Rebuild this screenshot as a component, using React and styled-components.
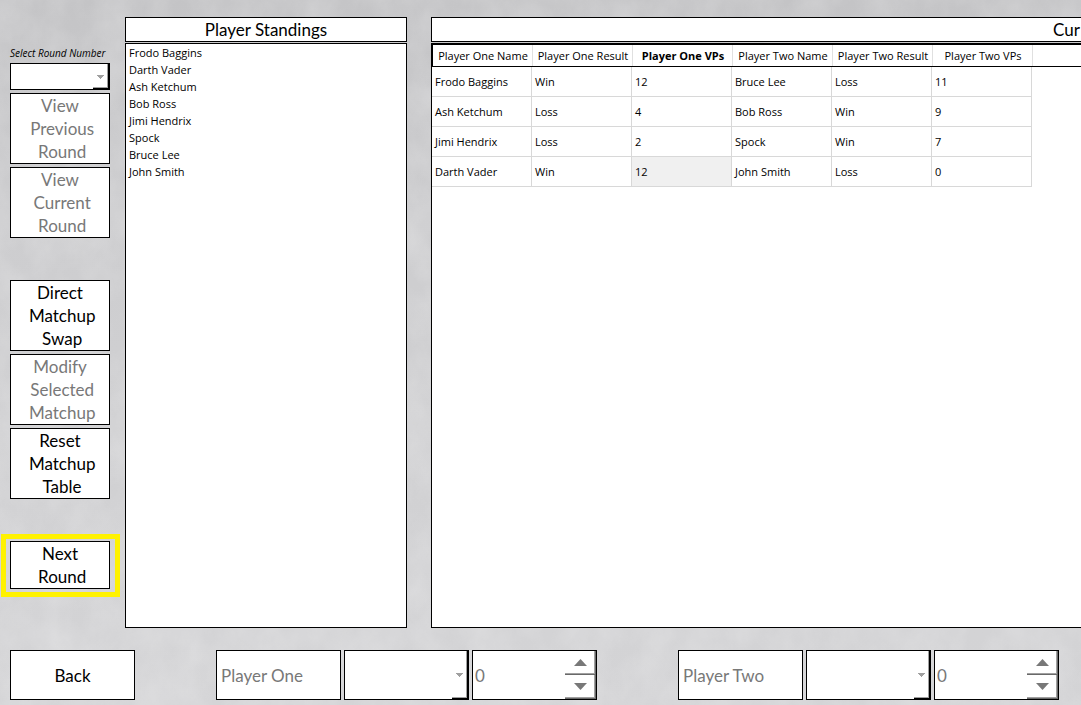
import React from "react";
import styled, { createGlobalStyle } from "styled-components";

const small = '"Open Sans", "Noto Sans", sans-serif';
const large = 'Lato, "Open Sans", sans-serif';

const GlobalStyle = createGlobalStyle`
  *, *::before, *::after { box-sizing: border-box; }
  body { margin: 0; background: #d2d2d4; overflow-x: hidden; }
  button, input, select { font: inherit; border-radius: 0; margin: 0; }
`;

const Page = styled.div`
  position: relative;
  isolation: isolate;
  display: flex;
  flex-direction: column;
  gap: 22px;
  min-height: 100vh;
  padding: 17px 0 5px 10px;
  overflow: hidden;
  font-family: ${large};
  font-size: 17px;
  line-height: 23px;
  color: #000;
`;

const Texture = styled.svg`
  position: absolute;
  inset: 0;
  z-index: -1;
  width: 100%;
  height: 100%;
`;

const Main = styled.main`
  flex: 1;
  display: grid;
  grid-template-columns: 100px 282px minmax(0, 1fr);
  column-gap: 15px;
`;

const Sidebar = styled.aside`
  display: flex;
  flex-direction: column;
  gap: 42px;
  padding-top: 28px;
`;

const Group = styled.div`
  display: flex;
  flex-direction: column;
  gap: 3px;
`;

const RoundLabel = styled.label`
  height: 15px;
  font-family: ${small};
  font-size: 10px;
  line-height: 17px;
  font-style: italic;
  white-space: nowrap;
`;

const Button = styled.button`
  position: relative;
  width: ${(p) => p.$width || "100%"};
  min-height: ${(p) => p.$height || "0"};
  padding: 0;
  border: 1px solid #000;
  background: #fff;
  color: #000;
  text-align: center;
  white-space: pre;
  &:disabled { color: #787878; }
`;

const HighlightedButton = styled(Button)`
  &::after {
    content: "";
    position: absolute;
    inset: -8px -11px -9px -10px;
    border: 5px solid #fff200;
    pointer-events: none;
  }
`;

const SelectBox = styled.div`
  position: relative;
  width: ${(p) => p.$width || "100%"};
  height: ${(p) => p.$height};
  &::after {
    content: "";
    position: absolute;
    top: 1px;
    right: 0;
    bottom: 0;
    width: 17px;
    border: solid #000;
    border-width: 0 2px 2px 0;
    box-shadow: inset -1px -1px #a0a0a0;
    pointer-events: none;
  }
  svg {
    position: absolute;
    top: 50%;
    right: 6px;
    margin-top: -2px;
    pointer-events: none;
  }
`;

const Select = styled.select`
  display: block;
  appearance: none;
  width: 100%;
  height: 100%;
  padding: 0 4px;
  border: 1px solid #000;
  background: #fff;
  opacity: 1;
`;

const Panel = styled.section`
  display: flex;
  flex-direction: column;
  gap: 1px;
  margin-left: ${(p) => (p.$wide ? "9px" : "0")};
  min-width: 0;
`;

const PanelTitle = styled.h2`
  margin: 0;
  height: 25px;
  padding: ${(p) => (p.$wide ? "0 1px 0 0" : "0")};
  border: 1px solid #000;
  border-right-width: ${(p) => (p.$wide ? "0" : "1px")};
  background: #fff;
  font-size: 17px;
  font-weight: 400;
  line-height: 24px;
  text-align: ${(p) => (p.$wide ? "right" : "center")};
`;

const PanelBody = styled.div`
  flex: 1;
  border: 1px solid #000;
  border-right-width: ${(p) => (p.$wide ? "0" : "1px")};
  background: #fff;
  font-family: ${small};
  font-size: 11px;
  line-height: 17px;
`;

const Standings = styled.ol`
  list-style: none;
  margin: 0;
  padding: 0 3px;
`;

const Table = styled.table`
  width: 100%;
  table-layout: fixed;
  border-collapse: separate;
  border-spacing: 0;
`;

const Col = styled.col`
  width: 100px;
`;

const HeadCell = styled.th`
  height: 23px;
  padding: 0 0 0 2px;
  border: solid #000;
  border-width: 1px 0 1px 0;
  box-shadow: inset 1px 0 ${(p) => (p.$first ? "#000" : "#e0e0e0")};
  font-weight: ${(p) => (p.$bold ? 700 : 400)};
  white-space: nowrap;
  text-align: center;
`;

const Cell = styled.td`
  height: 30px;
  padding: 0 3px;
  border: solid #d8d8d8;
  border-width: 0 1px 1px 0;
  background: ${(p) => (p.$current ? "#f0f0f0" : "#fff")};
`;

const Footer = styled.footer`
  display: flex;
  gap: 81px;
`;

const Entry = styled.div`
  display: flex;
  gap: 3px;
`;

const TextInput = styled.input`
  width: 125px;
  height: 50px;
  padding: 0 4px;
  border: 1px solid #000;
  background: #fff;
  color: #787878;
`;

const SpinBox = styled.div`
  display: flex;
  width: 125px;
  height: 50px;
  border: 1px solid #000;
  background: #fff;
`;

const SpinInput = styled.input`
  flex: 1;
  min-width: 0;
  padding: 0 2px;
  border: 0;
  background: transparent;
  color: #787878;
  appearance: textfield;
  &::-webkit-inner-spin-button { display: none; }
`;

const Steps = styled.div`
  display: flex;
  flex-direction: column;
  width: 31px;
`;

const Step = styled.button`
  flex: 1;
  display: grid;
  place-items: center;
  padding: 0;
  border: solid #696969;
  border-width: 0 1px 1px 0;
  box-shadow: inset -1px -1px #a0a0a0;
  background: #fff;
`;

const SmallArrow = () => (
  <svg width="7" height="4" viewBox="0 0 7 4" shapeRendering="crispEdges" aria-hidden="true">
    <path d="M0 0h7v1H6v1H5v1H4v1H3V3H2V2H1V1H0z" fill="#a0a0a0" />
  </svg>
);

const StepArrow = ({ down }) => (
  <svg width="13" height="7" viewBox="0 0 13 7" aria-hidden="true">
    <path d={down ? "M0 0h13L6.5 7z" : "M0 7h13L6.5 0z"} fill="#787878" />
  </svg>
);

const players = ["Frodo Baggins", "Darth Vader", "Ash Ketchum", "Bob Ross", "Jimi Hendrix", "Spock", "Bruce Lee", "John Smith"];
const headings = ["Player One Name", "Player One Result", "Player One VPs", "Player Two Name", "Player Two Result", "Player Two VPs"];
const matchups = [
  ["Frodo Baggins", "Win", "12", "Bruce Lee", "Loss", "11"],
  ["Ash Ketchum", "Loss", "4", "Bob Ross", "Win", "9"],
  ["Jimi Hendrix", "Loss", "2", "Spock", "Win", "7"],
  ["Darth Vader", "Win", "12", "John Smith", "Loss", "0"],
];

function PlayerEntry({ name }) {
  return (
    <Entry>
      <TextInput aria-label={`${name} name`} defaultValue={name} disabled />
      <SelectBox $width="125px" $height="50px">
        <Select aria-label={`${name} result`} disabled />
        <SmallArrow />
      </SelectBox>
      <SpinBox>
        <SpinInput type="number" aria-label={`${name} VPs`} defaultValue={0} disabled />
        <Steps>
          <Step aria-label="Increase" disabled><StepArrow /></Step>
          <Step aria-label="Decrease" disabled><StepArrow down /></Step>
        </Steps>
      </SpinBox>
    </Entry>
  );
}

export default function App() {
  return (
    <Page>
      <GlobalStyle />
      <Texture aria-hidden="true">
        <defs>
          <linearGradient id="shade" x1="0" y1="0" x2="0" y2="1">
            <stop offset="0" stopColor="#c4c4c6" />
            <stop offset="0.3" stopColor="#cdcdcf" />
            <stop offset="1" stopColor="#d4d4d6" />
          </linearGradient>
          <filter id="stone" x="0" y="0" width="100%" height="100%">
            <feTurbulence type="fractalNoise" baseFrequency="0.03 0.024" numOctaves="5" seed="4" />
            <feColorMatrix values="0 0 0 0 1  0 0 0 0 1  0 0 0 0 1  1 0 0 0 -0.25" />
          </filter>
        </defs>
        <rect width="100%" height="100%" fill="url(#shade)" />
        <rect width="100%" height="100%" filter="url(#stone)" opacity="0.3" />
      </Texture>
      <Main>
        <Sidebar>
          <Group>
            <RoundLabel htmlFor="round">Select Round Number</RoundLabel>
            <SelectBox $height="27px">
              <Select id="round" disabled />
              <SmallArrow />
            </SelectBox>
            <Button disabled>{"View\n Previous\n Round"}</Button>
            <Button disabled>{"View\n Current\n Round"}</Button>
          </Group>
          <Group>
            <Button>{"Direct\n Matchup\n Swap"}</Button>
            <Button disabled>{"Modify\n Selected\n Matchup"}</Button>
            <Button>{"Reset\n Matchup\n Table"}</Button>
          </Group>
          <HighlightedButton>{"Next\n Round"}</HighlightedButton>
        </Sidebar>
        <Panel>
          <PanelTitle>Player Standings</PanelTitle>
          <PanelBody>
            <Standings>
              {players.map((name) => <li key={name}>{name}</li>)}
            </Standings>
          </PanelBody>
        </Panel>
        <Panel $wide>
          <PanelTitle $wide>Cur</PanelTitle>
          <PanelBody $wide>
            <Table>
              <colgroup>
                {headings.map((h) => <Col key={h} />)}
                <col />
              </colgroup>
              <thead>
                <tr>
                  {headings.map((h, i) => (
                    <HeadCell key={h} scope="col" $first={i === 0} $bold={i === 2}>{h}</HeadCell>
                  ))}
                  <HeadCell as="td" />
                </tr>
              </thead>
              <tbody>
                {matchups.map((row, r) => (
                  <tr key={row[0]}>
                    {row.map((value, c) => (
                      <Cell key={c} $current={r === 3 && c === 2}>{value}</Cell>
                    ))}
                  </tr>
                ))}
              </tbody>
            </Table>
          </PanelBody>
        </Panel>
      </Main>
      <Footer>
        <Button $width="125px" $height="50px">Back</Button>
        <PlayerEntry name="Player One" />
        <PlayerEntry name="Player Two" />
      </Footer>
    </Page>
  );
}
